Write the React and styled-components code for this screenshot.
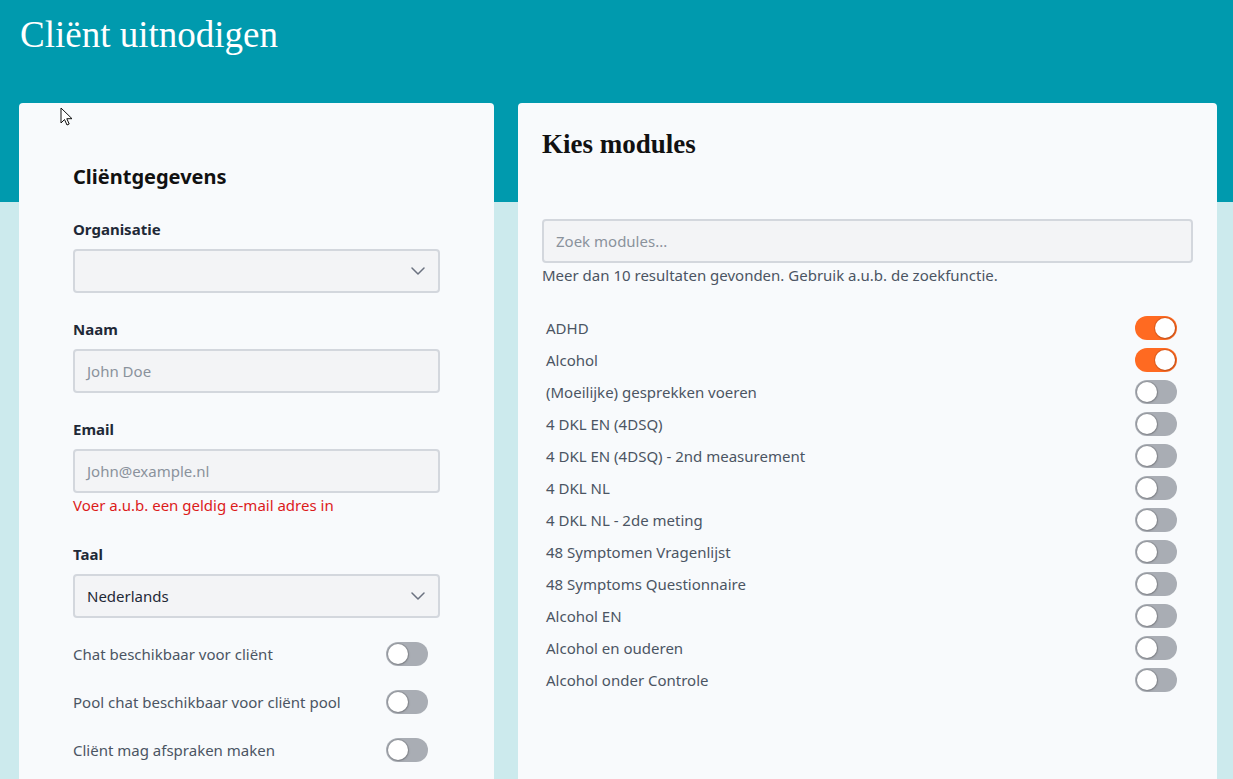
import React, { useState } from 'react';
import styled, { createGlobalStyle } from 'styled-components';

const GlobalStyle = createGlobalStyle`
  html, body {
    margin: 0;
    padding: 0;
  }
  body {
    font-family: 'Noto Sans', 'Open Sans', sans-serif;
    background: linear-gradient(to bottom, #009aae 0, #009aae 202px, #cceaed 202px);
    min-height: 779px;
    overflow: hidden;
  }
`;

const Page = styled.div`
  position: relative;
  height: 779px;
  overflow: hidden;
`;

const PageTitle = styled.h1`
  margin: 0;
  padding: 13px 20px 0;
  height: 103px;
  box-sizing: border-box;
  font-family: 'Liberation Serif', 'DejaVu Serif', serif;
  font-weight: 400;
  font-size: 37px;
  line-height: 44px;
  color: #ffffff;
`;

const Columns = styled.div`
  display: grid;
  grid-template-columns: 475px 699px;
  gap: 24px;
  padding: 0 16px 0 19px;
`;

const Card = styled.section`
  background: #f8fafc;
  border-radius: 4px;
  min-height: 720px;
  box-sizing: border-box;
  padding: ${(p) => p.$padding};
`;

const CardTitle = styled.h2`
  margin: 0;
  font-size: 20px;
  line-height: 24px;
  font-weight: 700;
  color: #111111;
  margin-bottom: 30px;
`;

const SerifTitle = styled.h2`
  margin: 0 0 60px;
  font-family: 'Liberation Serif', 'DejaVu Serif', serif;
  font-size: 27px;
  line-height: 30px;
  font-weight: 700;
  color: #111111;
`;

const Field = styled.div`
  display: flex;
  flex-direction: column;
  margin-bottom: ${(p) => p.$gap || 26}px;
`;

const Label = styled.label`
  font-size: 15px;
  line-height: 20px;
  font-weight: 700;
  color: #1f2937;
  margin-bottom: 10px;
`;

const Box = styled.div`
  position: relative;
  height: 44px;
  box-sizing: border-box;
  border: 2px solid #d3d7dd;
  border-radius: 4px;
  background: #f3f4f6;
  display: flex;
  align-items: center;
  padding: 0 12px;
  font-size: 15px;
  color: ${(p) => (p.$placeholder ? '#8a929c' : '#1f2937')};
`;

const Chevron = styled.svg`
  position: absolute;
  right: 13px;
  top: 50%;
  margin-top: -4px;
`;

const ErrorText = styled.div`
  margin-top: 2px;
  font-size: 15px;
  line-height: 20px;
  color: #dc1b1b;
`;

const OptionList = styled.div`
  display: flex;
  flex-direction: column;
  gap: 24px;
  padding-right: 12px;
`;

const OptionRow = styled.div`
  display: flex;
  align-items: center;
  justify-content: space-between;
  height: 24px;
  font-size: 15px;
  color: #4b5563;
`;

const Track = styled.button`
  position: relative;
  flex: none;
  width: 42px;
  height: 24px;
  border: none;
  padding: 0;
  border-radius: 12px;
  cursor: pointer;
  background: ${(p) => (p.$on ? '#ff6a21' : '#a9adb4')};
`;

const Knob = styled.span`
  position: absolute;
  top: 2px;
  left: ${(p) => (p.$on ? '20px' : '2px')};
  width: 20px;
  height: 20px;
  border-radius: 50%;
  background: #ffffff;
  box-shadow: 0 0 0 1px rgba(0, 0, 0, 0.12), 1px 1px 2px rgba(0, 0, 0, 0.15);
`;

const SearchBox = styled.input`
  width: 100%;
  height: 44px;
  box-sizing: border-box;
  border: 2px solid #d3d7dd;
  border-radius: 4px;
  background: #f3f4f6;
  padding: 0 12px;
  font-family: inherit;
  font-size: 15px;
  color: #1f2937;
  outline: none;

  &::placeholder {
    color: #8a929c;
  }
`;

const Hint = styled.div`
  margin-top: 2px;
  font-size: 15px;
  line-height: 20px;
  color: #4b5563;
`;

const ModuleList = styled.div`
  display: flex;
  flex-direction: column;
  gap: 8px;
  margin-top: 31px;
  padding: 0 16px 0 4px;
`;

const Cursor = styled.svg`
  position: absolute;
  left: 60px;
  top: 107px;
  pointer-events: none;
`;

function Toggle({ initial }) {
  const [on, setOn] = useState(initial);
  return (
    <Track $on={on} onClick={() => setOn(!on)}>
      <Knob $on={on} />
    </Track>
  );
}

function SelectBox({ value }) {
  return (
    <Box>
      {value}
      <Chevron width="14" height="8" viewBox="0 0 14 8" fill="none">
        <path d="M1 1l6 6 6-6" stroke="#6b7280" strokeWidth="1.5" strokeLinecap="round" strokeLinejoin="round" />
      </Chevron>
    </Box>
  );
}

const options = [
  'Chat beschikbaar voor cliënt',
  'Pool chat beschikbaar voor cliënt pool',
  'Cliënt mag afspraken maken',
];

const modules = [
  { name: 'ADHD', on: true },
  { name: 'Alcohol', on: true },
  { name: '(Moeilijke) gesprekken voeren' },
  { name: '4 DKL EN (4DSQ)' },
  { name: '4 DKL EN (4DSQ) - 2nd measurement' },
  { name: '4 DKL NL' },
  { name: '4 DKL NL - 2de meting' },
  { name: '48 Symptomen Vragenlijst' },
  { name: '48 Symptoms Questionnaire' },
  { name: 'Alcohol EN' },
  { name: 'Alcohol en ouderen' },
  { name: 'Alcohol onder Controle' },
];

export default function App() {
  return (
    <>
      <GlobalStyle />
      <Page>
        <PageTitle>Cliënt uitnodigen</PageTitle>
        <Columns>
          <Card $padding="62px 54px 40px">
            <CardTitle>Cliëntgegevens</CardTitle>
            <Field>
              <Label>Organisatie</Label>
              <SelectBox value="" />
            </Field>
            <Field>
              <Label>Naam</Label>
              <Box $placeholder>John Doe</Box>
            </Field>
            <Field $gap={29}>
              <Label>Email</Label>
              <Box $placeholder>John@example.nl</Box>
              <ErrorText>Voer a.u.b. een geldig e-mail adres in</ErrorText>
            </Field>
            <Field $gap={24}>
              <Label>Taal</Label>
              <SelectBox value="Nederlands" />
            </Field>
            <OptionList>
              {options.map((o) => (
                <OptionRow key={o}>
                  {o}
                  <Toggle initial={false} />
                </OptionRow>
              ))}
            </OptionList>
          </Card>
          <Card $padding="26px 24px 40px">
            <SerifTitle>Kies modules</SerifTitle>
            <SearchBox placeholder="Zoek modules..." />
            <Hint>Meer dan 10 resultaten gevonden. Gebruik a.u.b. de zoekfunctie.</Hint>
            <ModuleList>
              {modules.map((m) => (
                <OptionRow key={m.name}>
                  {m.name}
                  <Toggle initial={!!m.on} />
                </OptionRow>
              ))}
            </ModuleList>
          </Card>
        </Columns>
        <Cursor width="14" height="20" viewBox="0 0 14 20">
          <path d="M1 1v15l3.5-3.5 2.5 5.5 2.2-1-2.4-5.3H12z" fill="#ffffff" stroke="#111111" strokeWidth="1" strokeLinejoin="round" />
        </Cursor>
      </Page>
    </>
  );
}
